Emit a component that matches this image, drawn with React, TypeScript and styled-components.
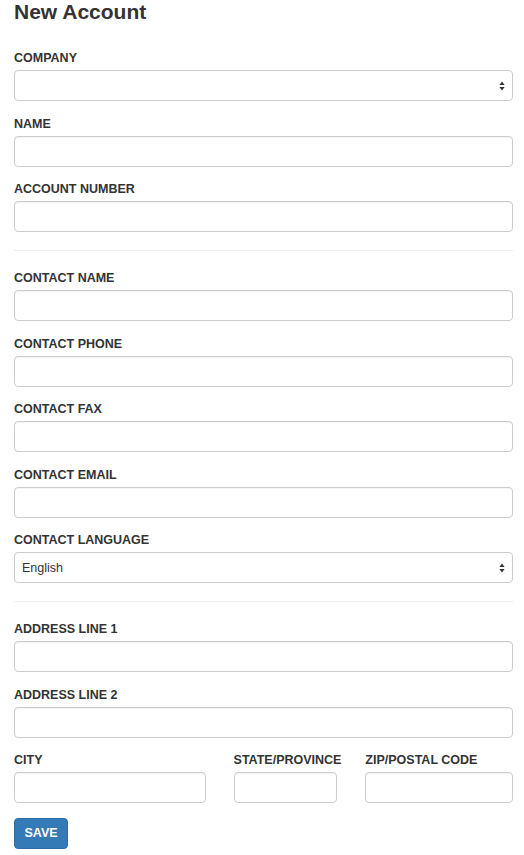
import React from 'react'
import styled, { createGlobalStyle } from 'styled-components'

const GlobalStyle = createGlobalStyle`
  html, body {
    margin: 0;
    padding: 0;
    background: #fff;
  }
  body {
    font-family: 'Liberation Sans', Arial, Helvetica, sans-serif;
    color: #333;
  }
  * {
    box-sizing: border-box;
  }
`

const Page = styled.div`
  width: 499px;
  margin-left: 14px;
  padding-bottom: 8px;
`

const Title = styled.h3`
  margin: 0 0 26px 0;
  font-size: 21px;
  line-height: 24px;
  font-weight: 700;
  color: #333;
`

const FormGroup = styled.div`
  margin-bottom: 14.5px;
`

const Label = styled.label`
  display: block;
  margin-bottom: 5px;
  padding-top: 1px;
  font-size: 12.5px;
  line-height: 14px;
  font-weight: 700;
  text-transform: uppercase;
  color: #333;
`

const Input = styled.input`
  display: block;
  width: 100%;
  height: 31px;
  padding: 5px 8px;
  font-family: inherit;
  font-size: 12.5px;
  color: #555;
  background: #fff;
  border: 1px solid #ccc;
  border-radius: 4px;
  box-shadow: inset 0 1px 1px rgba(0, 0, 0, 0.05);
  outline: none;
`

const SelectWrap = styled.div`
  position: relative;
`

const Select = styled.select`
  display: block;
  width: 100%;
  height: 31px;
  padding: 0 24px 0 7px;
  font-family: inherit;
  font-size: 12.5px;
  color: #333;
  background: #fff;
  border: 1px solid #ccc;
  border-radius: 4px;
  appearance: none;
  -webkit-appearance: none;
  outline: none;
`

// up/down arrows drawn over the right end of the select
const Arrows = styled.svg`
  position: absolute;
  right: 8px;
  top: 50%;
  margin-top: -5px;
  pointer-events: none;
`

const Divider = styled.hr`
  margin: 18px 0 19px 0;
  border: 0;
  border-top: 1px solid #eee;
  height: 0;
`

const Row = styled.div`
  display: flex;
  margin: 0 -14px;
`

const Col = styled.div<{ $span: number }>`
  width: ${(p) => (p.$span / 12) * 100}%;
  padding: 0 14px;
`

const SaveButton = styled.button`
  height: 31px;
  padding: 0 9.5px;
  font-family: inherit;
  font-size: 12.5px;
  font-weight: 700;
  text-transform: uppercase;
  color: #fff;
  background: #337ab7;
  border: 1px solid #2e6da4;
  border-radius: 4px;
  cursor: pointer;
`

const SelectArrows = () => (
  <Arrows width='6' height='10' viewBox='0 0 6 10'>
    <path d='M3 0.5 L5.6 4 L0.4 4 Z' fill='#333' />
    <path d='M3 9.5 L5.6 6 L0.4 6 Z' fill='#333' />
  </Arrows>
)

const Field: React.FC<{ label: string; children?: React.ReactNode }> = ({
  label,
  children,
}) => (
  <FormGroup>
    <Label>{label}</Label>
    {children ?? <Input type='text' />}
  </FormGroup>
)

const SelectField: React.FC<{ label: string; options: string[] }> = ({
  label,
  options,
}) => (
  <Field label={label}>
    <SelectWrap>
      <Select defaultValue={options[0]}>
        {options.map((o) => (
          <option key={o} value={o}>
            {o}
          </option>
        ))}
      </Select>
      <SelectArrows />
    </SelectWrap>
  </Field>
)

export default function App() {
  return (
    <>
      <GlobalStyle />
      <Page>
        <Title>New Account</Title>
        <form onSubmit={(e) => e.preventDefault()}>
          <SelectField label='Company' options={['']} />
          <Field label='Name' />
          <Field label='Account Number' />
          <Divider />
          <Field label='Contact Name' />
          <Field label='Contact Phone' />
          <Field label='Contact Fax' />
          <Field label='Contact Email' />
          <SelectField label='Contact Language' options={['English', 'French', 'Spanish']} />
          <Divider />
          <Field label='Address Line 1' />
          <Field label='Address Line 2' />
          <Row>
            <Col $span={5}>
              <Field label='City' />
            </Col>
            <Col $span={3}>
              <Field label='State/Province' />
            </Col>
            <Col $span={4}>
              <Field label='Zip/Postal Code' />
            </Col>
          </Row>
          <SaveButton type='submit'>Save</SaveButton>
        </form>
      </Page>
    </>
  )
}
